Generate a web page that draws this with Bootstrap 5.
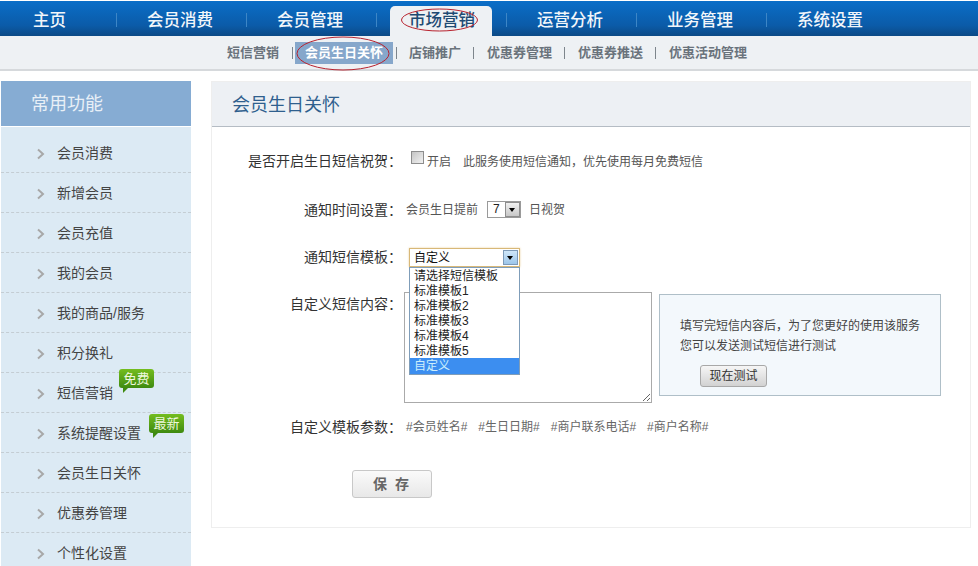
<!DOCTYPE html>
<html lang="zh-CN">
<head>
<meta charset="utf-8">
<title>会员生日关怀</title>
<link href="https://cdn.jsdelivr.net/npm/bootstrap@5.3.0/dist/css/bootstrap.min.css" rel="stylesheet">
<style>
html,body{height:566px;overflow:hidden;background:#fff}
body{font-family:"Liberation Sans","Noto Sans CJK SC",sans-serif;font-size:12px;color:#555}
.shell{position:relative;height:566px;overflow:hidden}
.topbar{margin-top:1px;height:35px;background:linear-gradient(#0a6ec8,#0b5ba8 70%,#0c4a86);padding-left:33px}
.topitem{font-size:16.5px;font-weight:500;color:#f2f6fa;line-height:39px;text-decoration:none;white-space:nowrap}
.topitem:hover{color:#fff}
.first-item{width:83px}
.std-item{width:99px;margin-left:30px}
.tsep{width:1px;height:14px;background:#3d86c6;margin-top:12px}
.tab-active{width:102px;height:30px;margin:5px 14px 0 13px;background:#eef1f4;border-radius:5px 5px 0 0;color:#1e4a73;line-height:29px;padding-left:19px}
.tab-active:hover{color:#1e4a73}
.subbar{height:35px;background:#eef1f4;border-bottom:2px solid #d6d9dc;padding-left:227px}
.subitem{font-size:13px;font-weight:700;color:#6a737c;line-height:34px;text-decoration:none;white-space:nowrap}
.subitem:hover{color:#6a737c}
.ssep{width:1px;height:12px;background:#7d858c;margin:11px 13px 0 12px}
.sub-active{background:#86a7cb;color:#fff;height:22px;line-height:22px;margin-top:6px;padding:0 10px}
.sub-active:hover{color:#fff}
.ssep-tight-l{margin:11px 2px 0 13px}
.ssep-tight-r{margin:11px 12px 0 3px}
.mainwrap{padding:10px 0 0 1px}
.sidecol{width:190px;flex:none}
.sidehead{height:45px;background:#86acd3;color:#e9f0f7;font-size:18px;line-height:47px;padding-left:30px;margin-bottom:1px}
.sidelist{--bs-list-group-bg:#dceaf4;--bs-list-group-border-width:0;border-radius:0;padding-top:6px;background:#dceaf4}
.sideitem{position:relative;height:40px;padding:2px 0 0 36px;background:#dceaf4;border-bottom:1px dashed #c4cdd3!important;font-size:14px;color:#444;white-space:nowrap}
.chev{width:8px;height:12px;margin-right:12px;flex:none}
.tagbox{position:absolute;width:35px;height:19px;border-radius:3px;background:linear-gradient(#74bd1f,#3e8a10);color:#eef8de;font-size:13px;line-height:19px;text-align:center}
.tagbox::after{content:"";position:absolute;left:4px;top:19px;border-style:solid;border-width:5px 5px 0 0;border-color:#3e8a10 transparent transparent transparent}
.tag-free{left:118px;top:-4px}
.tag-new{left:148px;top:1px}
.panelcard{width:760px;margin-left:20px;height:447px;border:1px solid #eee;border-radius:0;flex:none}
.panelhead{height:45px;background:#edf0f4;border-bottom:1px solid #b5bcc4;border-radius:0!important;padding:0 0 0 20px;font-size:18px;color:#2f5f8e;line-height:47px}
.formbody{padding:21px 0 0 0;position:relative}
.frow{min-height:24px;line-height:24px}
.frow-fixed{height:24px}
.flabel{width:190px;height:24px;flex:none;text-align:right;font-size:14px;color:#333;white-space:nowrap}
.flabel-low{line-height:26px}
.gap-a{margin-bottom:25px}
.gap-b{margin-bottom:24px}
.gap-c{margin-bottom:23px}
.gap-d{margin-bottom:11px}
.gap-e{margin-bottom:30px}
.cell-check{padding:3px 0 0 9px}
.cell-time{padding:2px 0 0 4px}
.cell-tpl{padding-left:3px}
.cell-text{padding-left:2px}
.form-check-input.chk[type=checkbox]{width:13px;height:13px;margin:-9px 3px 0 0;border:1px solid #8d8d8d;border-radius:0;background:linear-gradient(135deg,#c4c4c4,#f2f2f2);flex:none}
.note{margin-left:12px}
.sel-small{width:34px;height:17px;border:1px solid #9a9a9a;margin:-2px 8px 0 9px;background:#fff;font-size:12px;line-height:15px;padding-left:5px;color:#222}
.arrowbox{width:15px;height:15px;background:linear-gradient(#f0f0f0,#c8c8c8);border:1px solid #8e8e8e;flex:none;position:relative}
.arrowbox::after{content:"";position:absolute;left:3px;top:5px;border-style:solid;border-width:4px 3.5px 0;border-color:#000 transparent transparent}
.sel-small .arrowbox{margin-left:auto}
.selwrap{position:relative;width:111px;margin-left:4px}
.sel-big{width:111px;height:19px;margin-top:3px;border:1px solid #d8b878;box-shadow:0 0 2px #e9cf9e;background:#fff;font-size:12px;line-height:19px;padding-left:4px;color:#111}
.sel-big .arrowbox{margin-left:auto;margin-right:1px;margin-top:1px;background:linear-gradient(#cfe6f8,#9cc6ea);border-color:#7d9ab8}
.droplist{position:absolute;left:0;top:19px;width:111px;z-index:5;border:1px solid #7f9db9;background:#fff;font-size:12px;line-height:17px;color:#222}
.dropopt{height:15px;padding-left:4px;white-space:nowrap}
.dropopt-on{background:#3c8ef0;color:#cdeefc;height:16px}
.txtarea{width:248px;height:111px;border:1px solid #aaa;border-radius:0;padding:2px;flex:none;font-size:12px;resize:both}
.txtarea:focus{box-shadow:none;border-color:#aaa}
.infobox{width:282px;height:102px;margin:2px 0 0 7px;background:#f3f8fc;border:1px solid #afbfc8;padding:21px 0 0 20px;line-height:20px;color:#444;flex:none}
.testbtn{--bs-btn-padding-y:0;--bs-btn-padding-x:0;--bs-btn-font-size:12px;width:67px;height:22px;line-height:20px;margin:9px 0 0 20px;display:block;border:1px solid #a8a8a8;border-radius:3px;background:linear-gradient(#f6f6f6,#d2d2d2);color:#333}
.params{padding-left:4px;color:#666;line-height:26px}
.params span{margin-right:11px}
.savebtn{--bs-btn-padding-y:0;--bs-btn-padding-x:0;width:80px;height:28px;margin-left:140px;display:block;border:1px solid #c8c8c8;border-radius:3px;background:linear-gradient(#fafafa,#e8e8e8);color:#666;font-size:14px;font-weight:700;line-height:26px;letter-spacing:2px}
.ringlay{position:absolute;left:0;top:0;width:978px;height:80px;pointer-events:none;z-index:8}
</style>
</head>
<body>
<div class="shell">
  <nav class="topbar d-flex">
    <a class="topitem first-item" href="#">主页</a><i class="tsep"></i>
    <a class="topitem std-item" href="#">会员消费</a><i class="tsep"></i>
    <a class="topitem std-item" href="#">会员管理</a><i class="tsep"></i>
    <a class="topitem tab-active" href="#">市场营销</a><i class="tsep"></i>
    <a class="topitem std-item" href="#">运营分析</a><i class="tsep"></i>
    <a class="topitem std-item" href="#">业务管理</a><i class="tsep"></i>
    <a class="topitem std-item" href="#">系统设置</a>
  </nav>
  <div class="subbar d-flex">
    <a class="subitem" href="#">短信营销</a><i class="ssep ssep-tight-l"></i>
    <a class="subitem sub-active" href="#">会员生日关怀</a><i class="ssep ssep-tight-r"></i>
    <a class="subitem" href="#">店铺推广</a><i class="ssep"></i>
    <a class="subitem" href="#">优惠券管理</a><i class="ssep"></i>
    <a class="subitem" href="#">优惠券推送</a><i class="ssep"></i>
    <a class="subitem" href="#">优惠活动管理</a>
  </div>
  <svg class="ringlay" viewBox="0 0 978 80" aria-hidden="true">
    <ellipse cx="439.5" cy="20" rx="38" ry="11" fill="none" stroke="#b8222e" stroke-width="1"/>
    <ellipse cx="343" cy="53.5" rx="46" ry="16.5" fill="none" stroke="#b8222e" stroke-width="1"/>
  </svg>

  <div class="mainwrap d-flex align-items-start">
    <aside class="sidecol">
      <div class="sidehead">常用功能</div>
      <ul class="list-group sidelist">
        <li class="list-group-item sideitem d-flex align-items-center"><svg class="chev" viewBox="0 0 8 12"><path d="M1 1.5 6 6 1 10.5" fill="none" stroke="#a8a8a8" stroke-width="2"/></svg>会员消费</li>
        <li class="list-group-item sideitem d-flex align-items-center"><svg class="chev" viewBox="0 0 8 12"><path d="M1 1.5 6 6 1 10.5" fill="none" stroke="#a8a8a8" stroke-width="2"/></svg>新增会员</li>
        <li class="list-group-item sideitem d-flex align-items-center"><svg class="chev" viewBox="0 0 8 12"><path d="M1 1.5 6 6 1 10.5" fill="none" stroke="#a8a8a8" stroke-width="2"/></svg>会员充值</li>
        <li class="list-group-item sideitem d-flex align-items-center"><svg class="chev" viewBox="0 0 8 12"><path d="M1 1.5 6 6 1 10.5" fill="none" stroke="#a8a8a8" stroke-width="2"/></svg>我的会员</li>
        <li class="list-group-item sideitem d-flex align-items-center"><svg class="chev" viewBox="0 0 8 12"><path d="M1 1.5 6 6 1 10.5" fill="none" stroke="#a8a8a8" stroke-width="2"/></svg>我的商品/服务</li>
        <li class="list-group-item sideitem d-flex align-items-center"><svg class="chev" viewBox="0 0 8 12"><path d="M1 1.5 6 6 1 10.5" fill="none" stroke="#a8a8a8" stroke-width="2"/></svg>积分换礼</li>
        <li class="list-group-item sideitem d-flex align-items-center"><svg class="chev" viewBox="0 0 8 12"><path d="M1 1.5 6 6 1 10.5" fill="none" stroke="#a8a8a8" stroke-width="2"/></svg>短信营销<span class="tagbox tag-free">免费</span></li>
        <li class="list-group-item sideitem d-flex align-items-center"><svg class="chev" viewBox="0 0 8 12"><path d="M1 1.5 6 6 1 10.5" fill="none" stroke="#a8a8a8" stroke-width="2"/></svg>系统提醒设置<span class="tagbox tag-new">最新</span></li>
        <li class="list-group-item sideitem d-flex align-items-center"><svg class="chev" viewBox="0 0 8 12"><path d="M1 1.5 6 6 1 10.5" fill="none" stroke="#a8a8a8" stroke-width="2"/></svg>会员生日关怀</li>
        <li class="list-group-item sideitem d-flex align-items-center"><svg class="chev" viewBox="0 0 8 12"><path d="M1 1.5 6 6 1 10.5" fill="none" stroke="#a8a8a8" stroke-width="2"/></svg>优惠券管理</li>
        <li class="list-group-item sideitem d-flex align-items-center"><svg class="chev" viewBox="0 0 8 12"><path d="M1 1.5 6 6 1 10.5" fill="none" stroke="#a8a8a8" stroke-width="2"/></svg>个性化设置</li>
      </ul>
    </aside>

    <section class="card panelcard">
      <div class="card-header panelhead">会员生日关怀</div>
      <div class="formbody">
        <div class="d-flex frow frow-fixed gap-a">
          <div class="flabel flabel-low">是否开启生日短信祝贺：</div>
          <div class="cell-check d-flex align-items-center">
            <input class="form-check-input chk" type="checkbox" aria-label="开启"><span>开启</span><span class="note">此服务使用短信通知，优先使用每月免费短信</span>
          </div>
        </div>
        <div class="d-flex frow frow-fixed gap-b">
          <div class="flabel flabel-low">通知时间设置：</div>
          <div class="cell-time d-flex align-items-center">
            <span>会员生日提前</span>
            <div class="sel-small d-flex"><span>7</span><span class="arrowbox"></span></div>
            <span>日视贺</span>
          </div>
        </div>
        <div class="d-flex frow frow-fixed gap-c">
          <div class="flabel">通知短信模板：</div>
          <div class="cell-tpl">
            <div class="selwrap">
              <div class="sel-big d-flex"><span>自定义</span><span class="arrowbox"></span></div>
              <div class="droplist">
                <div class="dropopt">请选择短信模板</div>
                <div class="dropopt">标准模板1</div>
                <div class="dropopt">标准模板2</div>
                <div class="dropopt">标准模板3</div>
                <div class="dropopt">标准模板4</div>
                <div class="dropopt">标准模板5</div>
                <div class="dropopt dropopt-on">自定义</div>
              </div>
            </div>
          </div>
        </div>
        <div class="d-flex frow gap-d">
          <div class="flabel">自定义短信内容：</div>
          <div class="d-flex cell-text">
            <textarea class="form-control txtarea" aria-label="自定义短信内容"></textarea>
            <div class="infobox">填写完短信内容后，为了您更好的使用该服务<br>您可以发送测试短信进行测试
              <button type="button" class="btn testbtn">现在测试</button>
            </div>
          </div>
        </div>
        <div class="d-flex frow gap-e">
          <div class="flabel flabel-low">自定义模板参数：</div>
          <div class="params"><span>#会员姓名#</span><span>#生日日期#</span><span>#商户联系电话#</span><span>#商户名称#</span></div>
        </div>
        <button type="button" class="btn savebtn">保 存</button>
      </div>
    </section>
  </div>
</div>
<script src="https://cdn.jsdelivr.net/npm/bootstrap@5.3.0/dist/js/bootstrap.bundle.min.js"></script>
</body>
</html>
